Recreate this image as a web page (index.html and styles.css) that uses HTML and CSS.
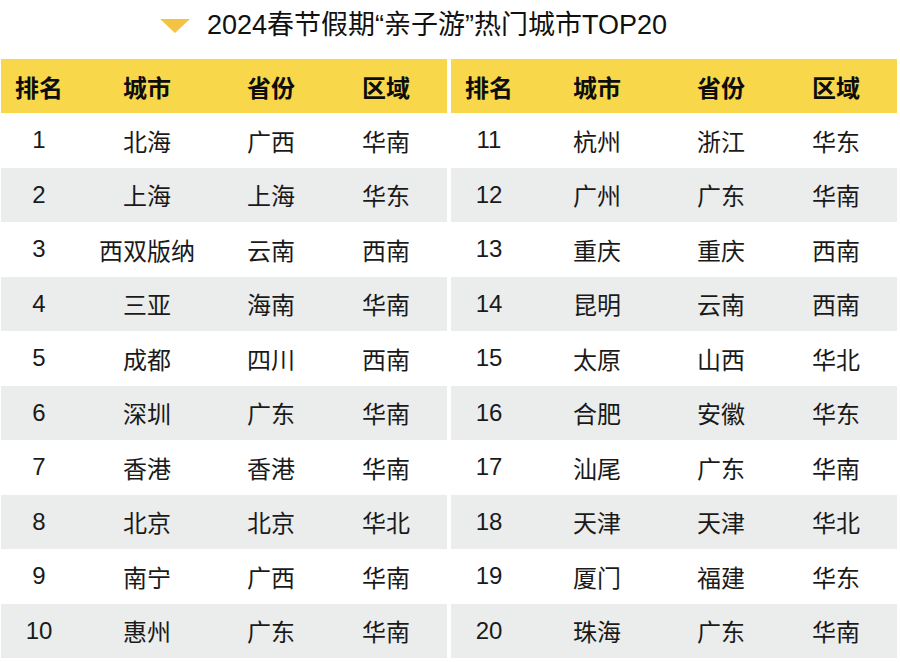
FILE: index.html
```html
<!DOCTYPE html>
<html lang="zh-CN">
<head>
<meta charset="utf-8">
<link rel="stylesheet" href="styles.css">
</head>
<body>
<div class="page">
  <div class="title">
    <svg class="tri" width="30" height="14" viewBox="0 0 30 14"><polygon points="0,0 30,0 15,14" fill="#F5C343"/></svg>
    <span class="title-text">2024春节假期“亲子游”热门城市TOP20</span>
  </div>
  <div class="tables">
    <div class="table">
      <div class="row head"><div>排名</div><div>城市</div><div>省份</div><div>区域</div></div>
      <div class="row"><div>1</div><div>北海</div><div>广西</div><div>华南</div></div>
      <div class="row alt"><div>2</div><div>上海</div><div>上海</div><div>华东</div></div>
      <div class="row"><div>3</div><div>西双版纳</div><div>云南</div><div>西南</div></div>
      <div class="row alt"><div>4</div><div>三亚</div><div>海南</div><div>华南</div></div>
      <div class="row"><div>5</div><div>成都</div><div>四川</div><div>西南</div></div>
      <div class="row alt"><div>6</div><div>深圳</div><div>广东</div><div>华南</div></div>
      <div class="row"><div>7</div><div>香港</div><div>香港</div><div>华南</div></div>
      <div class="row alt"><div>8</div><div>北京</div><div>北京</div><div>华北</div></div>
      <div class="row"><div>9</div><div>南宁</div><div>广西</div><div>华南</div></div>
      <div class="row alt"><div>10</div><div>惠州</div><div>广东</div><div>华南</div></div>
    </div>
    <div class="table">
      <div class="row head"><div>排名</div><div>城市</div><div>省份</div><div>区域</div></div>
      <div class="row"><div>11</div><div>杭州</div><div>浙江</div><div>华东</div></div>
      <div class="row alt"><div>12</div><div>广州</div><div>广东</div><div>华南</div></div>
      <div class="row"><div>13</div><div>重庆</div><div>重庆</div><div>西南</div></div>
      <div class="row alt"><div>14</div><div>昆明</div><div>云南</div><div>西南</div></div>
      <div class="row"><div>15</div><div>太原</div><div>山西</div><div>华北</div></div>
      <div class="row alt"><div>16</div><div>合肥</div><div>安徽</div><div>华东</div></div>
      <div class="row"><div>17</div><div>汕尾</div><div>广东</div><div>华南</div></div>
      <div class="row alt"><div>18</div><div>天津</div><div>天津</div><div>华北</div></div>
      <div class="row"><div>19</div><div>厦门</div><div>福建</div><div>华东</div></div>
      <div class="row alt"><div>20</div><div>珠海</div><div>广东</div><div>华南</div></div>
    </div>
  </div>
</div>
</body>
</html>
```
FILE: styles.css
```css
html, body {
  margin: 0;
  padding: 0;
  background: #ffffff;
}
body {
  font-family: "Liberation Sans", "Noto Sans CJK SC", sans-serif;
  color: #1a1a1a;
}
.page {
  width: 900px;
  height: 662px;
  overflow: hidden;
}
.title {
  height: 59px;
  display: flex;
  align-items: center;
  padding-left: 160px;
  padding-bottom: 9px;
  box-sizing: border-box;
}
.tri {
  display: block;
  margin-top: 1px;
}
.title-text {
  margin-left: 17px;
  font-size: 27px;
  line-height: 1;
  color: #111;
}
.tables {
  display: flex;
  gap: 4px;
  padding-left: 1px;
}
.table {
  width: 446px;
}
.row {
  display: grid;
  grid-template-columns: 76px 140px 108px 122px;
  height: 54.5px;
  align-items: center;
  font-size: 24px;
}
.row > div {
  text-align: center;
}
.row.head {
  height: 54px;
  background: #F8D74B;
  font-weight: 700;
  color: #0d0d0d;
}
.row.alt {
  background: #EBECEC;
}
```
